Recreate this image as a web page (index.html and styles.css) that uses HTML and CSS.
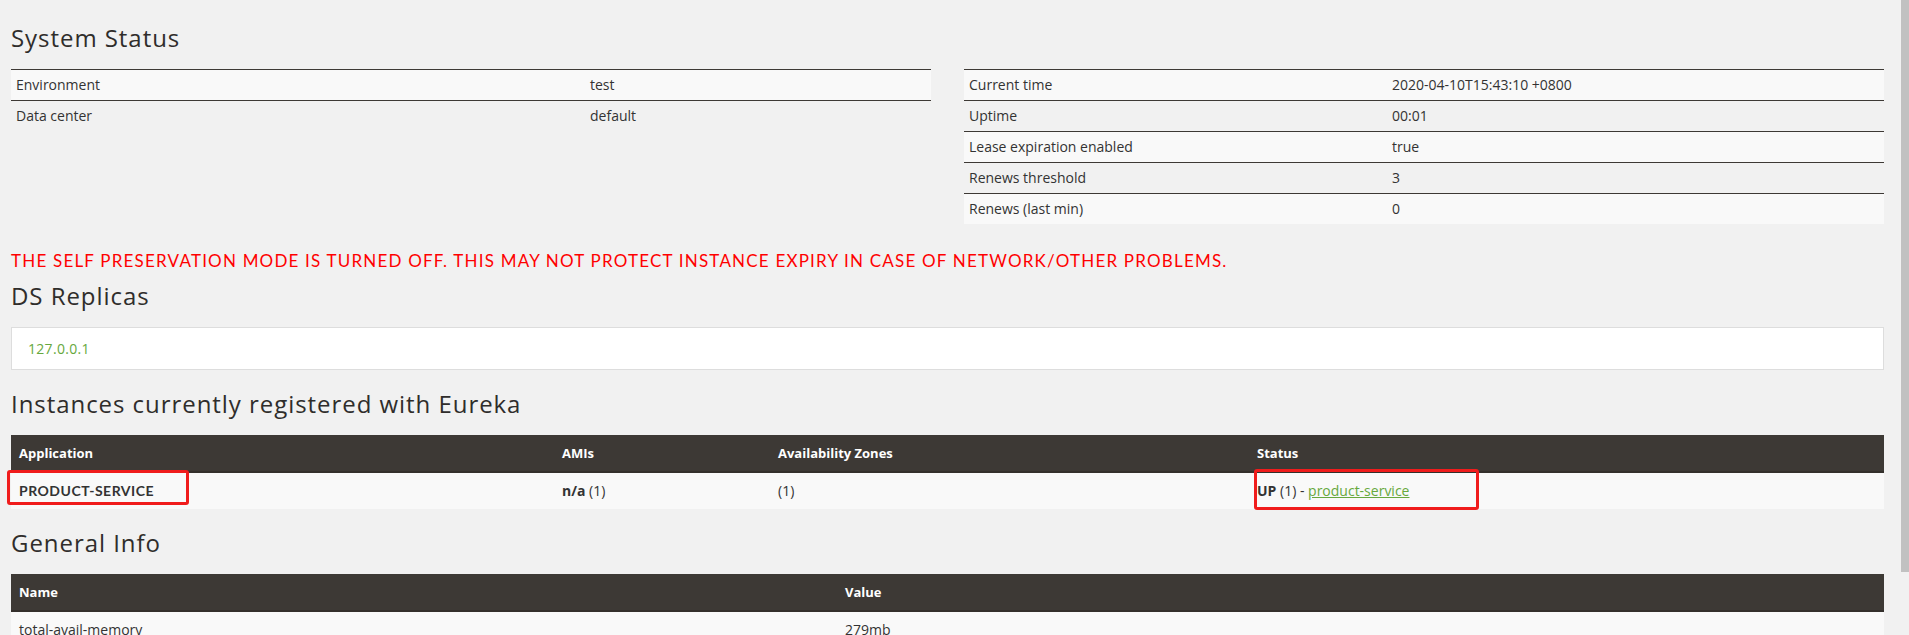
FILE: index.html
```html
<!DOCTYPE html>
<html>
<head>
<meta charset="utf-8">
<link rel="stylesheet" href="styles.css">
</head>
<body>
<div class="page">
  <h1 class="heading first">System Status</h1>
  <div class="status-grid">
    <table class="kv kv-left">
      <tr class="odd"><td class="k">Environment</td><td>test</td></tr>
      <tr><td class="k">Data center</td><td>default</td></tr>
    </table>
    <table class="kv kv-right">
      <tr class="odd"><td class="k">Current time</td><td>2020-04-10T15:43:10 +0800</td></tr>
      <tr><td class="k">Uptime</td><td>00:01</td></tr>
      <tr class="odd"><td class="k">Lease expiration enabled</td><td>true</td></tr>
      <tr><td class="k">Renews threshold</td><td>3</td></tr>
      <tr class="odd"><td class="k">Renews (last min)</td><td>0</td></tr>
    </table>
  </div>
  <h4 class="warning">THE SELF PRESERVATION MODE IS TURNED OFF. THIS MAY NOT PROTECT INSTANCE EXPIRY IN CASE OF NETWORK/OTHER PROBLEMS.</h4>
  <h1 class="heading tight">DS Replicas</h1>
  <ul class="replicas">
    <li><a class="link plain" href="#">127.0.0.1</a></li>
  </ul>
  <h1 class="heading">Instances currently registered with Eureka</h1>
  <table class="grid instances">
    <thead>
      <tr><th class="c-app">Application</th><th class="c-ami">AMIs</th><th class="c-az">Availability Zones</th><th>Status</th></tr>
    </thead>
    <tbody>
      <tr class="odd">
        <td class="app"><span class="mark-wrap">PRODUCT-SERVICE<span class="mark mark-app"></span></span></td>
        <td><b>n/a</b> (1)</td>
        <td>(1)</td>
        <td><span class="mark-wrap"><b>UP</b> (1) - <a class="link" href="#">product-service</a><span class="mark mark-status"></span></span></td>
      </tr>
    </tbody>
  </table>
  <h1 class="heading">General Info</h1>
  <table class="grid info">
    <thead>
      <tr><th class="c-name">Name</th><th>Value</th></tr>
    </thead>
    <tbody>
      <tr class="odd"><td>total-avail-memory</td><td>279mb</td></tr>
    </tbody>
  </table>
</div>
<div class="scrollbar"><div class="thumb"></div></div>
</body>
</html>
```

FILE: styles.css
```css
html, body {
  margin: 0;
  padding: 0;
  background: #f1f1f1;
  height: 635px;
  overflow: hidden;
}

body {
  font-family: "Open Sans", "Liberation Sans", sans-serif;
  font-size: 14px;
  color: #2e2e2e;
}

.page {
  padding: 0 25px 0 11px;
}

.heading {
  font-family: "Open Sans", "Lato", sans-serif;
  font-weight: 500;
  font-size: 24px;
  line-height: 30px;
  color: #2f2d2b;
  margin: 19px 0 16px 0;
  letter-spacing: 0.95px;
}

.heading.first {
  margin-top: 0;
  padding-top: 23px;
}

.heading.tight {
  margin-top: 10px;
}

.status-grid {
  display: grid;
  grid-template-columns: 920px 920px;
  column-gap: 33px;
  align-items: start;
}

table {
  border-collapse: collapse;
  border-spacing: 0;
}

.kv {
  width: 100%;
}

.kv td {
  padding: 5px 5px;
  line-height: 20px;
  border-top: 1px solid #3d3935;
  font-size: 14px;
  color: #333;
}

.kv-left .k {
  width: 564px;
}

.kv-right .k {
  width: 413px;
}

tr.odd td {
  background: #f9f9f9;
}

.warning {
  font-family: "Lato", "Open Sans", sans-serif;
  font-weight: 400;
  font-size: 17px;
  line-height: 20px;
  color: #ff0000;
  margin: 27px 0 0 0;
  letter-spacing: 1.2px;
}

.replicas {
  list-style: none;
  margin: 0;
  padding: 10px 16px;
  background: #fff;
  border: 1px solid #dddddd;
  line-height: 21px;
}

.replicas li {
  font-size: 14px;
  letter-spacing: 0.3px;
}

.link {
  color: #67a83d;
  text-decoration: underline;
}

.link.plain {
  text-decoration: none;
}

.grid {
  width: 100%;
}

.grid th {
  background: #3d3935;
  color: #fff;
  text-align: left;
  font-weight: 700;
  font-size: 13px;
  padding: 8px;
  line-height: 20px;
  border-bottom: 2px solid #34302c;
}

.grid td {
  padding: 8px;
  line-height: 20px;
  font-size: 14px;
  color: #333;
}

.c-app { width: 527px; }
.c-ami { width: 200px; }
.c-az { width: 463px; }
.c-name { width: 810px; }

.app {
  font-family: "Lato", "Open Sans", sans-serif;
  font-weight: 700;
  letter-spacing: 0.5px;
  color: #222;
}

.mark-wrap {
  position: relative;
}

.mark {
  position: absolute;
  border: 3px solid #f01c1c;
  border-radius: 3px;
  pointer-events: none;
}

.mark-app {
  left: -12px;
  top: -12px;
  width: 176px;
  height: 29px;
}

.mark-status {
  left: -3px;
  top: -12px;
  width: 219px;
  height: 35px;
}

.scrollbar {
  position: fixed;
  top: 0;
  right: 0;
  width: 17px;
  height: 635px;
  background: #f1f1f1;
}

.thumb {
  margin-left: 9px;
  width: 8px;
  height: 572px;
  background: #c1c1c1;
}
```
